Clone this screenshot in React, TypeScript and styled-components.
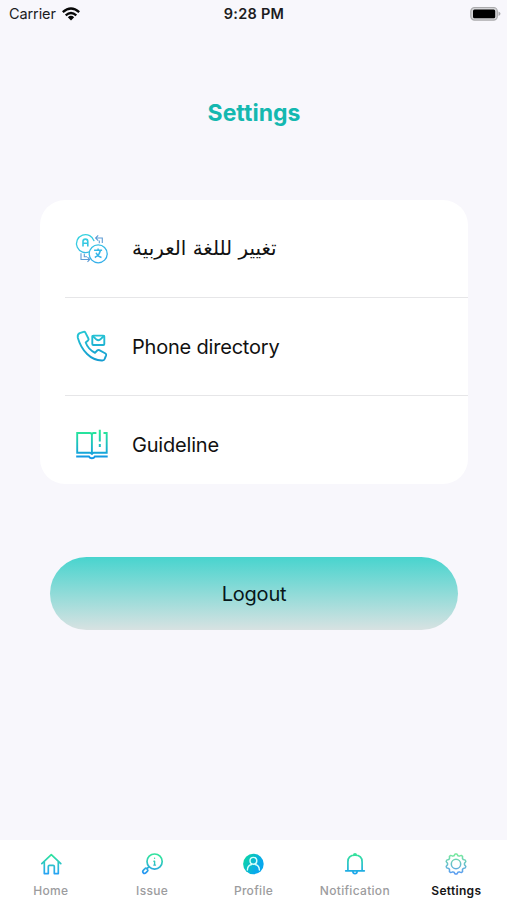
import React from 'react';
import styled, { createGlobalStyle } from 'styled-components';

const GlobalStyle = createGlobalStyle`
  * { box-sizing: border-box; }
  body { margin: 0; background: #f8f7fc; font-family: Inter, "Liberation Sans", sans-serif; }
`;

const Screen = styled.div`
  width: 507px;
  height: 900px;
  display: flex;
  flex-direction: column;
  background: #f8f7fc;
  overflow: hidden;
`;

const StatusBar = styled.header`
  height: 27px;
  padding: 0 6px 0 9px;
  display: grid;
  grid-template-columns: 1fr auto 1fr;
  align-items: center;
  color: #1c1c1e;
`;
const Carrier = styled.div`
  display: flex;
  align-items: center;
  gap: 6px;
  font-size: 14.5px;
  letter-spacing: -0.1px;
`;
const Clock = styled.time`
  font-size: 14.5px;
  font-weight: 600;
  letter-spacing: 0.25px;
  margin-right: 2px;
`;
const Battery = styled.div`
  display: flex;
  justify-content: flex-end;
`;

const Title = styled.h1`
  margin: 71px 0 0;
  padding-left: 1px;
  height: 30px;
  line-height: 30px;
  text-align: center;
  font-size: 23px;
  font-weight: 700;
  letter-spacing: 0;
  color: #14b8b0;
`;

const Card = styled.ul`
  list-style: none;
  margin: 72px 39px 0 40px;
  padding: 0;
  height: 284px;
  flex: none;
  border-radius: 25px;
  background: #fff;
  overflow: hidden;
`;
const Row = styled.li<{ $divided?: boolean }>`
  height: 98px;
  margin-left: 25px;
  padding-left: 9px;
  display: flex;
  align-items: center;
  gap: 22px;
  border-bottom: 1px solid ${(p) => (p.$divided ? '#e6e6e8' : 'transparent')};
`;
const RowIcon = styled.svg`
  width: 36px;
  height: 36px;
  flex: none;
  fill: none;
`;
const RowLabel = styled.span<{ $arabic?: boolean }>`
  font-family: ${(p) => (p.$arabic ? '"DejaVu Sans", sans-serif' : 'inherit')};
  font-size: ${(p) => (p.$arabic ? '19.9px' : '20px')};
  line-height: 26px;
  letter-spacing: ${(p) => (p.$arabic ? '0' : '-0.2px')};
  color: #111;
  white-space: nowrap;
`;

const LogoutButton = styled.button`
  margin: 73px 49px 0 50px;
  height: 73px;
  flex: none;
  border: 0;
  border-radius: 37px;
  background: linear-gradient(#48d4ce, #d8e2e2);
  font: 400 20px Inter, sans-serif;
  letter-spacing: -0.2px;
  color: #08171a;
`;

const TabBar = styled.nav`
  margin-top: auto;
  height: 60px;
  display: grid;
  grid-template-columns: repeat(5, 1fr);
  background: #fff;
`;
const Tab = styled.div<{ $active?: boolean }>`
  display: flex;
  flex-direction: column;
  align-items: center;
  padding-top: 12px;
  gap: 8px;
  font-size: 12px;
  line-height: 14px;
  letter-spacing: 0.3px;
  font-weight: ${(p) => (p.$active ? 600 : 500)};
  color: ${(p) => (p.$active ? '#161616' : '#9c9c9e')};
`;
const TabIcon = styled.svg`
  width: 24px;
  height: 24px;
  fill: none;
  stroke-width: 1.7;
  stroke-linecap: round;
  stroke-linejoin: round;
`;

function Gradient({ id, from, to, slant = 0, height = 24 }: { id: string; from: string; to: string; slant?: number; height?: number }) {
  return (
    <defs>
      <linearGradient id={id} gradientUnits="userSpaceOnUse" x1="0" y1="0" x2={slant} y2={height}>
        <stop offset="0.1" stopColor={from} />
        <stop offset="0.9" stopColor={to} />
      </linearGradient>
    </defs>
  );
}

const TranslateIcon = () => (
  <RowIcon viewBox="0 0 36 36" stroke="url(#translate)" strokeWidth="1.3">
    <Gradient id="translate" from="#35d6de" to="#34afe9" height={36} slant={12} />
    <path d="M15.8 20.5A9 9 0 1 1 20.2 10.2" />
    <circle cx="24.2" cy="22.8" r="9" />
    <path d="M9 15.5v-4.9q0-2.5 2.4-2.5t2.4 2.5v4.9M9 12.2h4.8" strokeWidth="1.6" />
    <path d="M20.1 19.3h8M24.1 17.6v1.7M26.4 19.5q-1.1 5-5.6 7M22 21.7q1.6 3.4 5.5 4.8" strokeWidth="1.5" />
    <path d="M24.2 4.4 21.6 7l2.6 2.6M21.8 7h6.5v5M25.3 9.5v2.7M13.5 30.8l2.2-2.3-2.2-2.3M15.4 28.5H7v-6.2M10.3 22.8v3H13" stroke="#5e9cd5" strokeWidth="1.1" />
  </RowIcon>
);
const PhoneIcon = () => (
  <RowIcon viewBox="0 0 36 36" stroke="url(#phone)" strokeWidth="1.9" strokeLinecap="round" strokeLinejoin="round">
    <Gradient id="phone" from="#25c5d4" to="#159bd0" height={36} />
    <path d="M5.7 4.2 9.5 2.8q1.3-.4 1.9.8l3 5.9q.6 1.2-.4 2l-2.3 2q2.4 6.8 9.3 10.3l2.2-2.3q1-.9 2.1-.3l6.2 3.3q1 .6.6 1.8l-1.3 3.4q-.7 2-3 1.8Q19.5 31.3 13.1 25T3.8 8.7q-.5-3.4 1.9-4.5Z" />
    <rect x="18.3" y="6.6" width="12" height="9.4" rx="1" />
    <path d="m18.7 7 3.8 3.6q1.8 1.5 3.6 0L29.9 7" />
  </RowIcon>
);
const GuideIcon = () => (
  <RowIcon viewBox="0 0 36 36" stroke="url(#guide)" strokeWidth="1.9">
    <Gradient id="guide" from="#28eb96" to="#1297e6" height={34} />
    <path d="M22.4 6h-2.8Q17.9 6 17.9 8q0-2-2-2H3.2v19.8h12.7q2 0 2 2 0-2 2-2H32.7V6h-3.2M17.9 7v20M2.2 29.5h12.7q1 1.8 3 1.8t3-1.8H33.7" />
    <path d="M25.8 2.8v11.8M25.8 17v3" strokeWidth="2" />
  </RowIcon>
);

const HomeIcon = () => (
  <TabIcon viewBox="0 0 24 24" stroke="url(#home)">
    <Gradient id="home" from="#2ee49b" to="#28a4f4" />
    <path d="m2.8 11.7 9.5-9 9.5 9M5.3 9.5v12.1h4v-7q0-1.2 1.2-1.2h3.6q1.2 0 1.2 1.2v7h4V9.5" />
  </TabIcon>
);
const IssueIcon = () => (
  <TabIcon viewBox="0 0 24 24" stroke="url(#issue)">
    <Gradient id="issue" from="#32e29f" to="#2791fa" slant={-3} />
    <circle cx="14.6" cy="9.6" r="7.6" />
    <path d="m8.9 14.8-1.9 1.7M6.2 16.2l1.3 1.3q.8.8 0 1.6L6 20.6q-1.5 1.5-2.7.2t.2-2.7L5 16.6q.6-.7 1.2-.4Z" />
    <path d="M14.6 9.3v3.8m-.8 0h1.7M13.9 9.3h.7M14.6 6.2v.1" strokeWidth="1.4" />
  </TabIcon>
);
const ProfileIcon = () => (
  <TabIcon viewBox="0 0 24 24">
    <Gradient id="profile" from="#0bdc9b" to="#08a8ed" slant={22} height={12} />
    <circle cx="12.4" cy="12" r="10.3" fill="url(#profile)" />
    <circle cx="12.4" cy="8.8" r="3.4" stroke="#d8fffa" strokeWidth="1.4" />
    <path d="M6.4 18q.2-4.8 4.2-5.5M18.4 18q-.2-4.8-4.2-5.5" stroke="#d8fffa" strokeWidth="1.4" />
  </TabIcon>
);
const BellIcon = () => (
  <TabIcon viewBox="0 0 24 24" stroke="url(#bell)">
    <Gradient id="bell" from="#36e39b" to="#1ba5ee" />
    <path d="M2.7 18.8h18.6M4.9 18.6V10q0-6.8 7.1-6.8T19.1 10v8.6M10.7 3q.1-1.2 1.3-1.2T13.3 3M9.8 19.2q.2 2.4 2.2 2.4t2.2-2.4" />
  </TabIcon>
);
const gearPoints = Array.from({ length: 40 }, (_, i) => {
  const angle = ((i - 0.5) * Math.PI) / 20;
  const radius = i % 4 < 2 ? 10.1 : 8.5;
  return `${12 + radius * Math.sin(angle)},${12 - radius * Math.cos(angle)}`;
}).join(' ');
const GearIcon = () => (
  <TabIcon viewBox="0 0 24 24" stroke="url(#gear)">
    <Gradient id="gear" from="#75e99c" to="#599bf2" />
    <polygon points={gearPoints} strokeWidth="1.5" />
    <circle cx="12" cy="12" r="4.7" strokeWidth="1.5" />
  </TabIcon>
);

const tabs = [
  { label: 'Home', Icon: HomeIcon },
  { label: 'Issue', Icon: IssueIcon },
  { label: 'Profile', Icon: ProfileIcon },
  { label: 'Notification', Icon: BellIcon },
  { label: 'Settings', Icon: GearIcon, active: true },
];

export default function App() {
  return (
    <Screen>
      <GlobalStyle />
      <StatusBar>
        <Carrier>
          Carrier
          <svg width="18" height="14" viewBox="0 0 18 14" fill="none" stroke="#080808" strokeWidth="2.3">
            <path d="M.8 5.2q8.2-7.4 16.4 0M3.7 8.3q5.3-4.7 10.6 0" />
            <path d="M5.8 10.2q3.2-2.7 6.4 0L9 13.5Z" fill="#080808" stroke="none" />
          </svg>
        </Carrier>
        <Clock>9:28 PM</Clock>
        <Battery>
          <svg width="31" height="16" viewBox="0 0 31 16">
            <rect x=".8" y="1.5" width="26.5" height="12.6" rx="3.8" fill="#d4d4d7" stroke="#aaaaac" strokeWidth="1.2" />
            <rect x="3" y="3.5" width="22.2" height="8.8" rx="1.5" fill="#000" />
            <path d="M28.5 5.5q2 .8 2 2.3t-2 2.3Z" fill="#aaaaac" />
          </svg>
        </Battery>
      </StatusBar>
      <Title>Settings</Title>
      <Card>
        <Row $divided><TranslateIcon /><RowLabel $arabic lang="ar" dir="rtl">تغيير لللغة العربية</RowLabel></Row>
        <Row $divided><PhoneIcon /><RowLabel>Phone directory</RowLabel></Row>
        <Row><GuideIcon /><RowLabel>Guideline</RowLabel></Row>
      </Card>
      <LogoutButton>Logout</LogoutButton>
      <TabBar>
        {tabs.map(({ label, Icon, active }) => (
          <Tab key={label} $active={active}><Icon />{label}</Tab>
        ))}
      </TabBar>
    </Screen>
  );
}
